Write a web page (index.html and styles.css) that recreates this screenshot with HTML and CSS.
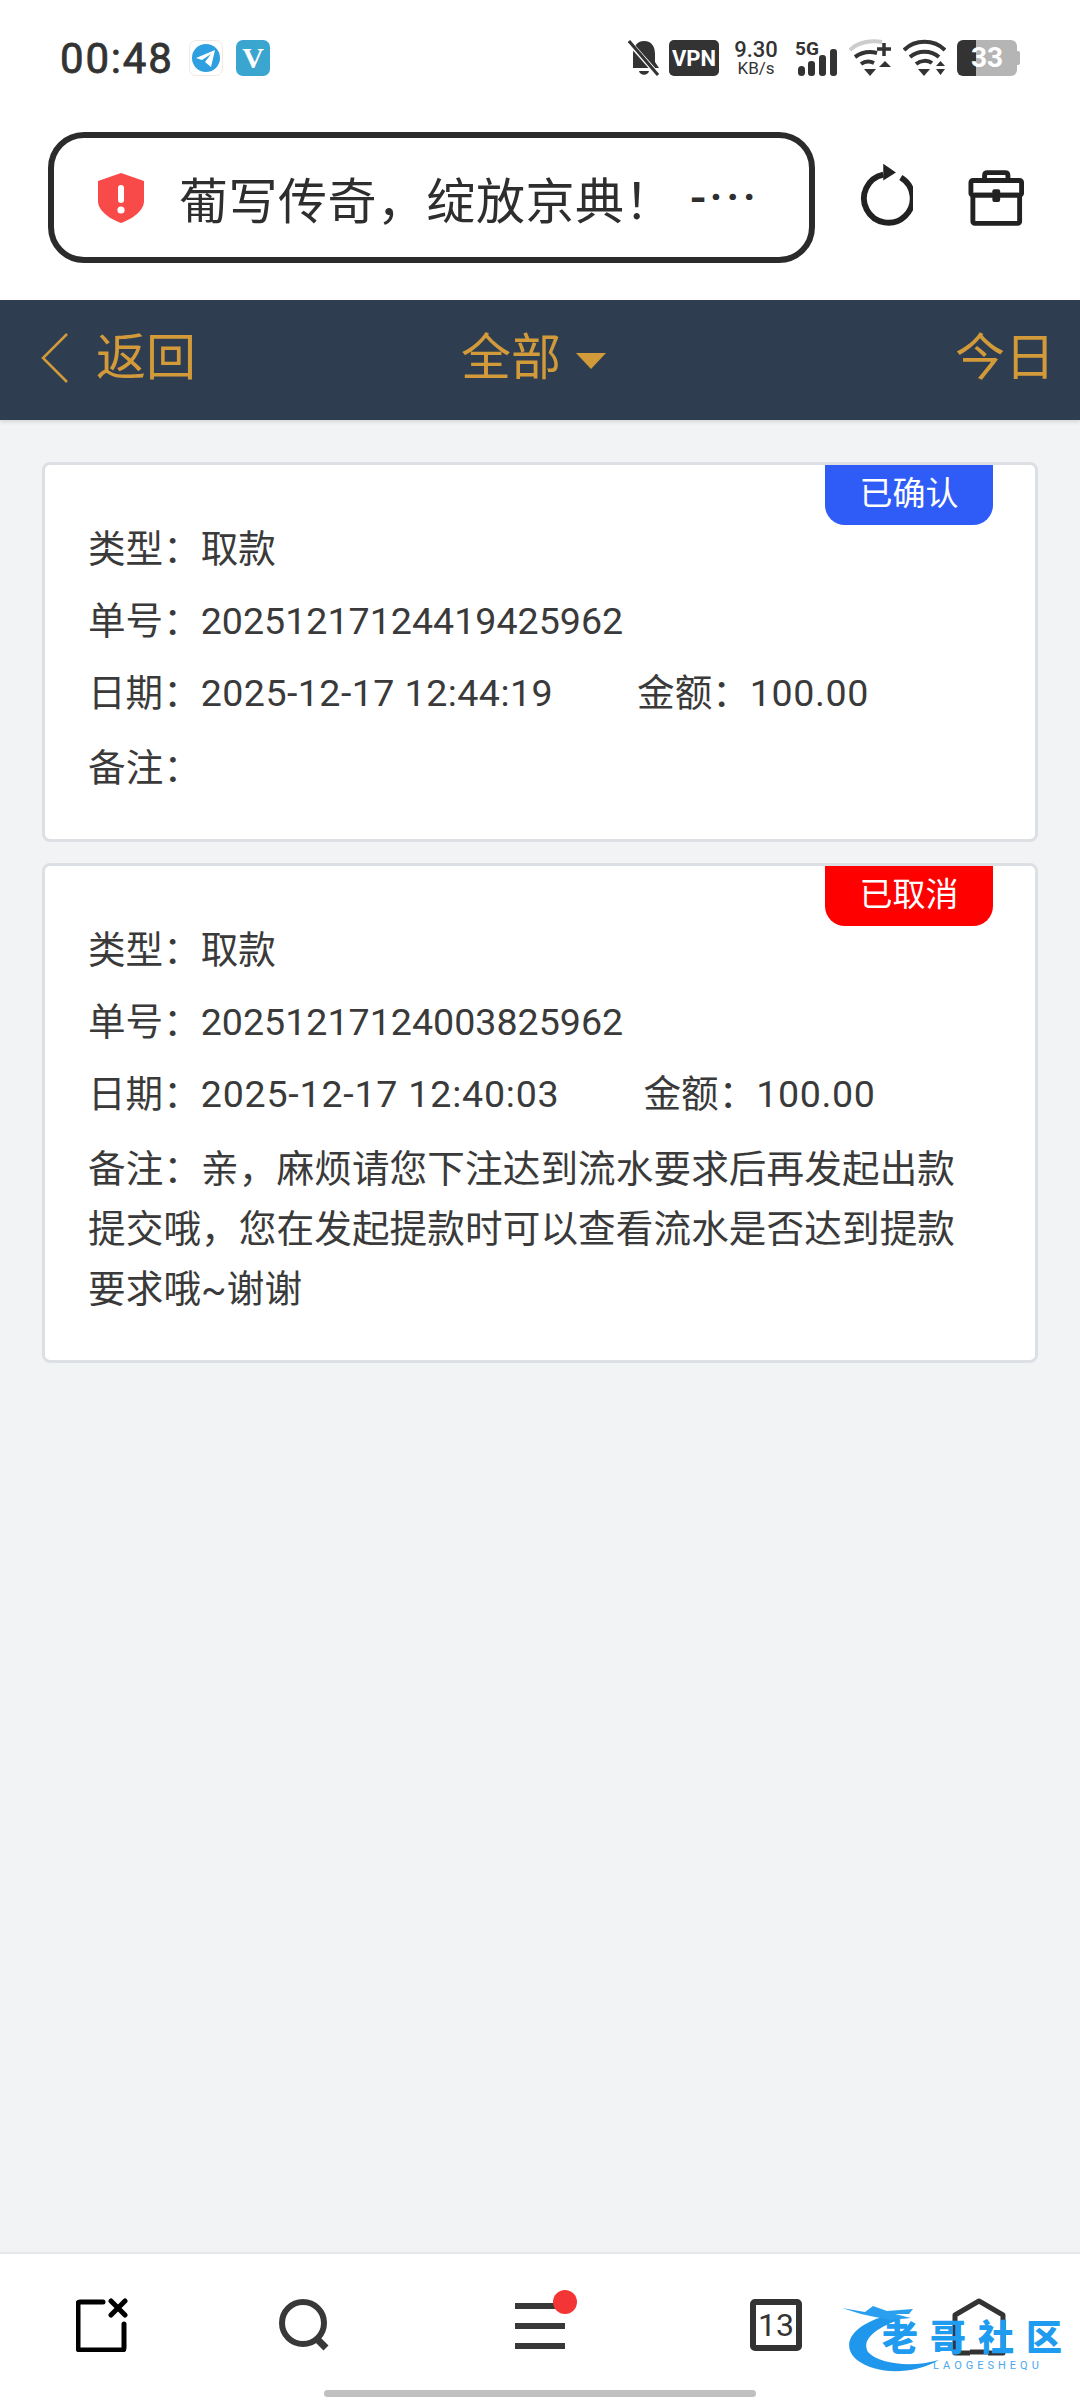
FILE: index.html
```html
<!DOCTYPE html>
<html lang="zh-CN">
<head>
  <meta charset="UTF-8" />
  <meta name="viewport" content="width=device-width, initial-scale=1.0"/>
  <title>账户明细</title>
  <link rel="stylesheet" href="styles.css">
</head>
<body>
  <!-- Status bar -->
  <div class="status-bar">
    <div class="status-left">
      <span class="clock">00:48</span>
      <span class="app-icon telegram">
        <svg viewBox="0 0 34 36" width="34" height="36">
          <circle cx="17" cy="18" r="14" fill="#2e9fe0"/>
          <path d="M7 18 L26 10 L22 27 L16 22 L22 14 L13 20 Z" fill="#fff"/>
        </svg>
      </span>
      <span class="app-icon vee">V</span>
    </div>
    <div class="status-right">
      <svg class="bell" viewBox="0 0 32 36" width="32" height="36">
        <path d="M16 1 C24 1 27 7 27 14 L27 22 L31 28 L5 28 L5 14 C5 7 9 1 16 1 Z" fill="#333"/>
        <path d="M11 31 L21 31 C20 36 12 36 11 31 Z" fill="#333"/>
        <path d="M1 2 L30 35" stroke="#fff" stroke-width="5"/>
        <path d="M1 1 L30 35" stroke="#333" stroke-width="3"/>
      </svg>
      <span class="vpn">VPN</span>
      <span class="speed"><b>9.30</b><i>KB/s</i></span>
      <span class="signal">
        <b>5G</b>
        <svg viewBox="0 0 43 36" width="43" height="36">
          <rect x="3" y="26" width="7" height="10" rx="3.5" fill="#333"/>
          <rect x="13" y="21" width="7" height="15" rx="3" fill="#333"/>
          <rect x="24" y="15" width="7" height="21" rx="3" fill="#333"/>
          <rect x="35" y="9" width="7" height="27" rx="3" fill="#333"/>
        </svg>
      </span>
      <svg viewBox="0 0 43 38" width="43" height="38">
        <path d="M1 11 C9 3 22 1 33 3" fill="none" stroke="#ccc" stroke-width="4"/>
        <path d="M6 18 C13 13 20 12 28 14" fill="none" stroke="#333" stroke-width="4"/>
        <path d="M12 25 C16 22 21 22 25 24" fill="none" stroke="#333" stroke-width="4"/>
        <path d="M15 30 L27 30 L21 37 Z" fill="#333"/>
        <path d="M28 10 L42 10 M35 4 L35 17" stroke="#333" stroke-width="3.5"/>
        <path d="M30 28 L42 28 L36 22 Z" fill="#333"/>
      </svg>
      <svg viewBox="0 0 43 38" width="43" height="38">
        <path d="M1 11 C12 0 31 0 42 11" fill="none" stroke="#333" stroke-width="4"/>
        <path d="M7 18 C15 11 28 11 36 18" fill="none" stroke="#333" stroke-width="4"/>
        <path d="M13 25 C18 21 25 21 29 24" fill="none" stroke="#333" stroke-width="4"/>
        <path d="M15 30 L27 30 L21 37 Z" fill="#333"/>
        <path d="M33 27 L42 27 L37.5 22 Z M33 30 L42 30 L37.5 36 Z" fill="#333"/>
      </svg>
      <span class="battery">33</span>
    </div>
  </div>

  <!-- Notice bar -->
  <div class="top-bar">
    <div class="notice">
      <svg viewBox="0 0 46 50" width="46" height="50">
        <path d="M23 0 L46 8 L46 28 C46 38 34 46 23 50 C12 46 0 38 0 28 L0 8 Z" fill="#f94a4a"/>
        <rect x="20" y="12" width="6" height="18" rx="3" fill="#fff"/>
        <circle cx="23" cy="37" r="3.6" fill="#fff"/>
      </svg>
      <span class="notice-text">葡写传奇&#xFF0C;绽放京典&#xFF01;</span>
      <span class="notice-more">-···</span>
    </div>
    <svg class="refresh" viewBox="0 0 58 64" width="58" height="64">
      <path d="M46 14 A25 25 0 1 1 28 11" fill="none" stroke="#222" stroke-width="6"/>
      <path d="M28 0 L41 9 L28 17 Z" fill="#222"/>
    </svg>
    <svg class="case" viewBox="0 0 58 58" width="58" height="58">
      <path d="M17 11 L17 6 Q17 3 20 3 L38 3 Q41 3 41 6 L41 11" fill="none" stroke="#222" stroke-width="5"/>
      <rect x="3" y="11" width="52" height="15" rx="2" fill="none" stroke="#222" stroke-width="5"/>
      <rect x="5" y="26" width="48" height="29" rx="2" fill="none" stroke="#222" stroke-width="5"/>
      <rect x="25" y="20" width="8" height="13" rx="2" fill="#222"/>
    </svg>
  </div>

  <!-- Nav -->
  <div class="nav">
    <div class="nav-back">
      <svg viewBox="0 0 30 50" width="30" height="50">
        <path d="M27 1 L3 25 L27 49" fill="none" stroke="#d39a3a" stroke-width="2.5"/>
      </svg>
      <span>返回</span>
    </div>
    <div class="nav-filter">
      <span>全部</span>
      <span class="caret"></span>
    </div>
    <div class="nav-today">今日</div>
  </div>

  <div class="content">
    <div class="card">
      <div class="badge badge-ok">已确认</div>
      <div class="row">类型&#xFF1A;取款</div>
      <div class="row">单号&#xFF1A;20251217124419425962</div>
      <div class="row">日期&#xFF1A;<span class="date">2025-12-17 12:44:19</span><span class="amount">金额&#xFF1A;<span class="money">100.00</span></span></div>
      <div class="row">备注&#xFF1A;</div>
    </div>

    <div class="card">
      <div class="badge badge-cancel">已取消</div>
      <div class="row">类型&#xFF1A;取款</div>
      <div class="row">单号&#xFF1A;20251217124003825962</div>
      <div class="row">日期&#xFF1A;<span class="date date-wide">2025-12-17 12:40:03</span><span class="amount">金额&#xFF1A;<span class="money">100.00</span></span></div>
      <div class="row">备注&#xFF1A;亲&#xFF0C;麻烦请您下注达到流水要求后再发起出款提交哦&#xFF0C;您在发起提款时可以查看流水是否达到提款要求哦~谢谢</div>
    </div>
  </div>

  <!-- Bottom toolbar -->
  <div class="toolbar">
    <div class="tool">
      <svg viewBox="0 0 52 54" width="52" height="54">
        <path d="M27 4 L4 4 Q2 4 2 6 L2 50 Q2 52 4 52 L46 52 Q48 52 48 50 L48 26" fill="none" stroke="#000" stroke-width="5" stroke-linecap="round"/>
        <path d="M35 3 L49 17 M49 3 L35 17" stroke="#000" stroke-width="5" stroke-linecap="round"/>
      </svg>
    </div>
    <div class="tool">
      <svg viewBox="0 0 52 54" width="52" height="54">
        <circle cx="24" cy="25" r="21" fill="none" stroke="#383838" stroke-width="6"/>
        <path d="M38 41 L47 50" stroke="#383838" stroke-width="7"/>
      </svg>
    </div>
    <div class="tool">
      <div class="menu-icon">
        <span></span><span></span><span></span>
        <div class="dot"></div>
      </div>
    </div>
    <div class="tool">
      <div class="tab-count">13</div>
    </div>
    <div class="tool">
      <svg viewBox="0 0 54 58" width="54" height="58">
        <path d="M18 55 L3 55 L3 17 L27 3 L51 17 L51 55 L36 55" fill="none" stroke="#333" stroke-width="5" stroke-linejoin="round"/>
        <path d="M18 54 L36 54" stroke="#333" stroke-width="5"/>
      </svg>
    </div>
    <div class="home-bar"></div>

    <!-- Watermark over the toolbar -->
    <div class="watermark">
      <svg viewBox="0 0 100 72" width="100" height="72">
        <path d="M48 13 C12 22 -2 42 16 58 C34 72 70 74 98 58 C70 66 38 62 27 50 C20 38 34 26 60 17 Z" fill="#1f97ec"/>
        <path d="M1 6 L24 10 L32 4 L46 9 L72 7 L68 12 L54 12 L70 16 L50 18 L34 15 L20 12 Z" fill="#2a9fef"/>
      </svg>
      <span class="wm-name">老哥社区</span>
      <span class="wm-sub">LAOGESHEQU</span>
    </div>
  </div>
</body>
</html>
```

FILE: styles.css
```css
* {
  box-sizing: border-box;
}

body {
  margin: 0;
  width: 1080px;
  height: 2400px;
  display: flex;
  flex-direction: column;
  background: #f2f3f5;
  color: #333;
  font-family: Roboto, "Noto Sans CJK SC", sans-serif;
}

.status-bar {
  height: 116px;
  flex: none;
  background: white;
  padding: 40px 60px 0 60px;
  display: flex;
  justify-content: space-between;
  align-items: flex-start;
}

.status-left {
  display: flex;
  align-items: center;
  height: 36px;
}

.clock {
  font-size: 42px;
  font-weight: 400;
  letter-spacing: 1.8px;
  color: #333;
  width: 129px;
  -webkit-text-stroke: 0.8px #333;
}

.app-icon {
  width: 34px;
  height: 36px;
  border-radius: 7px;
  margin-right: 13px;
  display: flex;
  align-items: center;
  justify-content: center;
}

.telegram {
  border: 1px solid #f3e9e2;
}

.telegram svg {
  flex: none;
}

.vee {
  background: #3aa5cf;
  color: white;
  font-family: "Liberation Serif", serif;
  font-size: 30px;
  font-weight: bold;
}

.status-right {
  display: flex;
  align-items: center;
  height: 36px;
}

.vpn {
  width: 50px;
  height: 36px;
  background: #333;
  color: white;
  border-radius: 5px;
  font-size: 22px;
  font-weight: 700;
  display: flex;
  align-items: center;
  justify-content: center;
  margin-right: 15px;
}

.speed {
  width: 44px;
  display: flex;
  flex-direction: column;
  align-items: center;
  margin-right: 17px;
}

.speed b {
  font-size: 22px;
  font-weight: 500;
  line-height: 21px;
}

.speed i {
  font-size: 17px;
  font-style: normal;
  line-height: 17px;
}

.signal {
  position: relative;
  width: 43px;
  height: 36px;
  margin-right: 11px;
}

.signal b {
  position: absolute;
  top: -1px;
  left: 0;
  font-size: 19px;
  line-height: 20px;
}

.status-right > svg {
  margin-right: 11px;
}

.status-right > svg.bell {
  margin-right: 9px;
}

.battery {
  position: relative;
  width: 60px;
  height: 36px;
  border-radius: 6px;
  background: linear-gradient(to right, #333 0, #333 19px, #b5b5b5 19px, #b5b5b5 100%);
  color: #fff;
  font-size: 28px;
  font-weight: 700;
  line-height: 36px;
  text-align: center;
  margin-right: 3px;
}

.battery::after {
  content: "";
  position: absolute;
  top: 11px;
  right: -3px;
  width: 3px;
  height: 14px;
  border-radius: 0 2px 2px 0;
  background: #b5b5b5;
}

.top-bar {
  height: 184px;
  flex: none;
  background: white;
  padding: 16px 56px 0 48px;
  display: flex;
  align-items: flex-start;
}

.notice {
  width: 767px;
  height: 131px;
  border: 6px solid #2b2b2b;
  border-radius: 36px;
  padding-left: 44px;
  display: flex;
  align-items: center;
  flex: none;
}

.notice-text {
  margin-left: 35px;
  font-size: 49px;
  letter-spacing: 0.5px;
  color: #2e2e2e;
  white-space: nowrap;
}

.notice-more {
  margin-left: 16px;
  font-size: 48px;
  font-weight: 500;
  letter-spacing: 3px;
  color: #2e2e2e;
  white-space: nowrap;
}

.refresh {
  margin: 31px 0 0 41px;
}

.case {
  margin: 37px 0 0 55px;
}

.nav {
  height: 120px;
  flex: none;
  background: #2e3e50;
  color: #d39a3a;
  font-size: 50px;
  line-height: 60px;
  display: grid;
  grid-template-columns: 421px auto 1fr;
  align-items: center;
  padding: 0 25px 4px 40px;
  box-shadow: 0 2px 4px rgba(0, 0, 0, 0.12);
}

.nav-back {
  display: flex;
  align-items: center;
  gap: 26px;
}

.nav-filter {
  display: flex;
  align-items: center;
  gap: 15px;
}

.caret {
  width: 0;
  height: 0;
  margin-top: 6px;
  border-left: 15px solid transparent;
  border-right: 15px solid transparent;
  border-top: 16px solid #d39a3a;
}

.nav-today {
  text-align: right;
}

.content {
  flex: 1;
  padding: 42px 42px 0 42px;
  display: flex;
  flex-direction: column;
  gap: 21px;
}

.card {
  position: relative;
  background: white;
  border: 3px solid #dcdfe3;
  border-radius: 8px;
  padding: 48px 48px 35px 43px;
  font-size: 37.6px;
  color: #3a3a3a;
}

.row {
  padding: 6px 0;
  line-height: 60px;
}

.row:last-child {
  padding-top: 9px;
  letter-spacing: 0.12px;
}

.date {
  letter-spacing: 0.44px;
}

.date-wide {
  letter-spacing: 0.78px;
}

.amount {
  margin-left: 84px;
}

.money {
  letter-spacing: 0.6px;
}

.badge {
  position: absolute;
  top: 0;
  right: 42px;
  width: 168px;
  height: 60px;
  border-radius: 0 0 20px 20px;
  color: white;
  font-size: 33px;
  line-height: 58px;
  text-align: center;
}

.badge-ok {
  background: #2f5cf6;
}

.badge-cancel {
  background: #ff0000;
}

.toolbar {
  position: relative;
  height: 148px;
  flex: none;
  background: white;
  border-top: 2px solid #e6e7e9;
  display: grid;
  grid-template-columns: 204px 201px 270px 202px 203px;
  align-items: start;
  padding-top: 44px;
}

.tool {
  display: flex;
  justify-content: center;
}

.menu-icon {
  position: relative;
  width: 50px;
  height: 46px;
  margin-top: 5px;
  display: flex;
  flex-direction: column;
  justify-content: space-between;
}

.menu-icon span {
  height: 6px;
  background: #383838;
}

.dot {
  position: absolute;
  top: -13px;
  right: -12px;
  width: 24px;
  height: 24px;
  border-radius: 50%;
  background: #f33535;
}

.tab-count {
  width: 52px;
  height: 52px;
  margin-top: 1px;
  border: 6px solid #333;
  border-radius: 5px;
  font-size: 32px;
  line-height: 40px;
  text-align: center;
  color: #333;
}

.home-bar {
  position: absolute;
  left: 324px;
  bottom: 3px;
  width: 432px;
  height: 7px;
  border-radius: 4px;
  background: #c0c0c0;
}

.watermark {
  position: absolute;
  left: 841px;
  top: 48px;
  width: 225px;
  height: 74px;
}

.wm-name {
  position: absolute;
  left: 41px;
  top: 16px;
  font-size: 36px;
  font-weight: 900;
  line-height: 42px;
  letter-spacing: 12px;
  color: #1f9bf0;
  white-space: nowrap;
}

.wm-sub {
  position: absolute;
  left: 92px;
  top: 58px;
  font-size: 11px;
  line-height: 12px;
  letter-spacing: 4px;
  color: #4aa8ec;
  white-space: nowrap;
}
```
